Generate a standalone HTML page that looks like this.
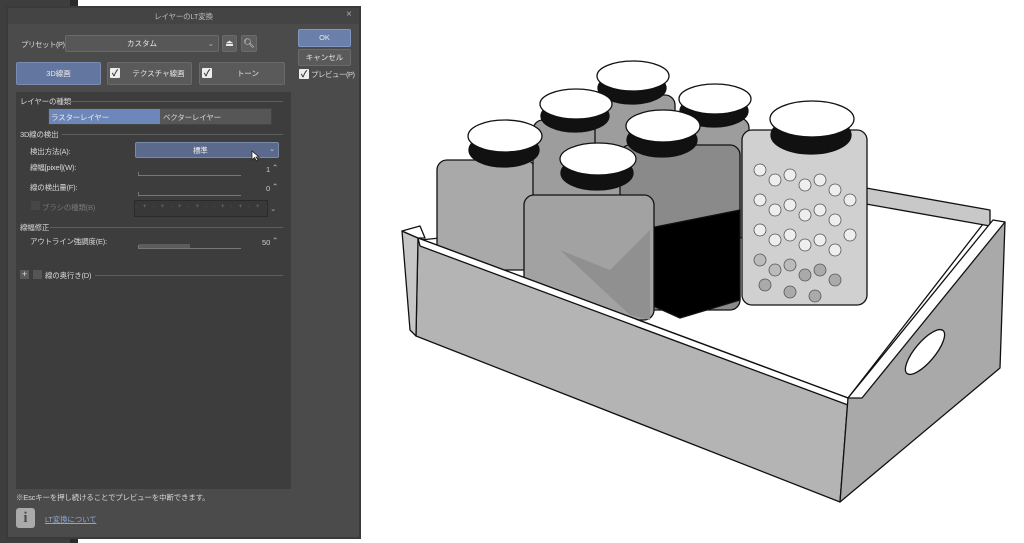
<!DOCTYPE html>
<html><head><meta charset="utf-8"><style>
*{margin:0;padding:0;box-sizing:border-box}
body{width:1024px;height:543px;background:#fff;position:relative;overflow:hidden;font-family:"Liberation Sans","Noto Sans CJK JP",sans-serif;font-size:7.5px;color:#ddd}
.a{position:absolute}
.lbl{position:absolute;font-size:7.5px;color:#d8d8d8;white-space:nowrap;letter-spacing:-0.2px}
.btn{position:absolute;border:1px solid #6a6a6a;background:#5a5a5a;color:#e8e8e8;text-align:center;border-radius:2px;font-size:7.5px;white-space:nowrap}
.sl{position:absolute;height:4px;border-left:1px solid #777;border-bottom:1px solid #777}
.hr{position:absolute;height:1px;background:#5e5e5e}
.chk{position:absolute;width:10px;height:10px;background:#eee;border-radius:1px;color:#333;font-size:9px;line-height:10px;text-align:center;font-weight:bold}
.sp{position:absolute;font-size:7.5px;color:#ccc}
</style></head><body>
<div class="a" style="left:0;top:0;width:70px;height:543px;background:#3e3e3e"></div>
<div class="a" style="left:70px;top:0;width:8px;height:543px;background:#2a2a2a"></div>
<div class="a" style="left:6px;top:6px;width:355px;height:533px;background:#3a3a3a"></div>
<div class="a" style="left:8px;top:8px;width:351px;height:529px;background:#4b4b4b"></div>
<div class="a" style="left:8px;top:8px;width:351px;height:16px;background:#444"></div>
<div class="lbl" style="left:0;width:367px;text-align:center;top:11px;color:#bbb">レイヤーのLT変換</div>
<div class="lbl" style="left:346px;top:9px;font-size:10px;color:#aaa">×</div>

<div class="lbl" style="left:21px;top:39px;letter-spacing:-0.5px">プリセット(P):</div>
<div class="btn" style="left:65px;top:35px;width:154px;height:17px;line-height:15px;background:#575757">カスタム<span style="position:absolute;right:4px;color:#bbb">⌄</span></div>
<div class="btn" style="left:222px;top:35px;width:15px;height:17px;background:#5e5e5e;font-size:9px;line-height:15px">⏏</div>
<div class="btn" style="left:241px;top:35px;width:16px;height:17px;background:#5e5e5e;font-size:9px;line-height:15px">🔍︎</div>

<div class="btn" style="left:298px;top:29px;width:53px;height:18px;line-height:16px;background:#6b7fab;border-color:#8497c0">OK</div>
<div class="btn" style="left:298px;top:49px;width:53px;height:17px;line-height:15px">キャンセル</div>
<div class="chk" style="left:299px;top:69px">✓</div>
<div class="lbl" style="left:311px;top:69px;letter-spacing:-0.5px">プレビュー(P)</div>

<div class="btn" style="left:16px;top:62px;width:85px;height:23px;line-height:21px;background:#6376a0;border-color:#7b8cb2">3D線画</div>
<div class="btn" style="left:107px;top:62px;width:85px;height:23px;line-height:21px;padding-left:18px">テクスチャ線画</div>
<div class="chk" style="left:110px;top:68px">✓</div>
<div class="btn" style="left:199px;top:62px;width:86px;height:23px;line-height:21px;padding-left:12px">トーン</div>
<div class="chk" style="left:202px;top:68px">✓</div>

<div class="a" style="left:16px;top:92px;width:275px;height:397px;background:#3d3d3d"></div>
<div class="lbl" style="left:20px;top:96px">レイヤーの種類</div><div class="hr" style="left:68px;top:101px;width:215px"></div>
<div class="a" style="left:48px;top:108px;width:224px;height:17px;background:#565656;border:1px solid #444"></div>
<div class="a" style="left:49px;top:109px;width:111px;height:15px;background:#6e87ba"></div>
<div class="lbl" style="left:51px;top:112px;color:#eee">ラスターレイヤー</div>
<div class="lbl" style="left:163px;top:112px">ベクターレイヤー</div>
<div class="lbl" style="left:20px;top:129px">3D線の検出</div><div class="hr" style="left:62px;top:134px;width:221px"></div>
<div class="lbl" style="left:30px;top:146px">検出方法(A):</div>
<div class="a" style="left:135px;top:142px;width:144px;height:16px;background:#5b6a8c;border:1px solid #7b8aa8;border-radius:2px"></div>
<div class="lbl" style="left:193px;top:145px;color:#eee">標準</div>
<div class="lbl" style="left:269px;top:144px;color:#ccc">⌄</div>
<svg class="a" style="left:251px;top:150px" width="10" height="12"><path d="M1 1 L1 10 L3.5 7.5 L5.5 11 L7 10 L5 7 L8 7 Z" fill="#fff" stroke="#222" stroke-width=".8"/></svg>
<div class="lbl" style="left:30px;top:162px">線幅[pixel](W):</div>
<div class="sp" style="left:266px;top:165px">1</div><div class="sp" style="left:272px;top:163px">⌃</div>
<div class="sl" style="left:138px;top:172px;width:103px"></div>
<div class="lbl" style="left:30px;top:182px">線の検出量(F):</div>
<div class="sp" style="left:266px;top:184px">0</div><div class="sp" style="left:272px;top:182px">⌃</div>
<div class="sl" style="left:138px;top:192px;width:103px"></div>
<div class="a" style="left:31px;top:201px;width:9px;height:9px;background:#474747"></div>
<div class="lbl" style="left:42px;top:202px;color:#777">ブラシの種類(B)</div>
<div class="a" style="left:134px;top:200px;width:134px;height:17px;background:#383838;border:1px solid #2a2a2a;color:#777;font-size:6px;letter-spacing:6px;line-height:12px;overflow:hidden">·+·+·+·+··+·+·+·+·</div>
<div class="lbl" style="left:270px;top:204px;color:#aaa">⌄</div>
<div class="lbl" style="left:20px;top:222px">線幅修正</div><div class="hr" style="left:50px;top:227px;width:233px"></div>
<div class="lbl" style="left:30px;top:236px">アウトライン強調度(E):</div>
<div class="sp" style="left:262px;top:238px">50</div><div class="sp" style="left:272px;top:236px">⌃</div>
<div class="sl" style="left:138px;top:245px;width:103px"></div>
<div class="a" style="left:139px;top:244px;width:51px;height:4px;background:#5c5c5c"></div>
<div class="a" style="left:20px;top:270px;width:9px;height:9px;background:#5a5a5a;color:#ddd;font-size:9px;line-height:8px;text-align:center">+</div>
<div class="a" style="left:33px;top:270px;width:9px;height:9px;background:#555"></div>
<div class="lbl" style="left:45px;top:270px">線の奥行き(D)</div><div class="hr" style="left:95px;top:275px;width:188px"></div>

<div class="lbl" style="left:16px;top:492px">※Escキーを押し続けることでプレビューを中断できます。</div>
<div class="a" style="left:16px;top:508px;width:19px;height:20px;background:#aaa;border-radius:3px;color:#4b4b4b;font-weight:bold;font-size:15px;text-align:center;line-height:20px;font-family:'Liberation Serif',serif">i</div>
<div class="lbl" style="left:45px;top:514px;color:#8aa6d0;text-decoration:underline">LT変換について</div>

<svg class="a" style="left:0;top:0" width="1024" height="543" viewBox="0 0 1024 543">
<g stroke="#111" stroke-width="1.3" stroke-linejoin="round">
<!-- floor & back inner walls -->
<polygon points="420,240 870,195 990,215 848,398" fill="#fff"/>
<polygon points="866,188 990,210 990,226 866,204" fill="#c8c8c8"/>
<!-- jars -->
<rect x="437" y="160" width="98" height="110" rx="10" fill="#a9a9a9"/>
<rect x="533" y="120" width="90" height="100" rx="10" fill="#9d9d9d"/>
<rect x="595" y="95" width="80" height="75" rx="10" fill="#9d9d9d"/>
<rect x="677" y="118" width="72" height="120" rx="10" fill="#9d9d9d"/>
<rect x="620" y="145" width="120" height="165" rx="10" fill="#8a8a8a"/>
<polygon points="640,230 740,210 740,300 680,318 640,300" fill="#000"/>
<rect x="524" y="195" width="130" height="125" rx="10" fill="#a2a2a2"/>
<polygon points="560,250 610,270 650,230 650,320 630,315" fill="#909090" stroke="none"/>
<rect x="742" y="130" width="125" height="175" rx="10" fill="#d0d0d0"/>
<g fill="#eee" stroke="#555" stroke-width=".8">
<circle cx="760" cy="170" r="6"/><circle cx="775" cy="180" r="6"/><circle cx="790" cy="175" r="6"/><circle cx="805" cy="185" r="6"/><circle cx="820" cy="180" r="6"/><circle cx="835" cy="190" r="6"/>
<circle cx="760" cy="200" r="6"/><circle cx="775" cy="210" r="6"/><circle cx="790" cy="205" r="6"/><circle cx="805" cy="215" r="6"/><circle cx="820" cy="210" r="6"/><circle cx="835" cy="220" r="6"/><circle cx="850" cy="200" r="6"/>
<circle cx="760" cy="230" r="6"/><circle cx="775" cy="240" r="6"/><circle cx="790" cy="235" r="6"/><circle cx="805" cy="245" r="6"/><circle cx="820" cy="240" r="6"/><circle cx="835" cy="250" r="6"/><circle cx="850" cy="235" r="6"/>
<circle cx="760" cy="260" r="6" fill="#bbb"/><circle cx="775" cy="270" r="6" fill="#bbb"/><circle cx="790" cy="265" r="6" fill="#bbb"/><circle cx="805" cy="275" r="6" fill="#aaa"/><circle cx="820" cy="270" r="6" fill="#aaa"/><circle cx="835" cy="280" r="6" fill="#aaa"/>
<circle cx="765" cy="285" r="6" fill="#aaa"/><circle cx="790" cy="292" r="6" fill="#aaa"/><circle cx="815" cy="296" r="6" fill="#aaa"/>
</g>
<g>
<ellipse cx="632" cy="88" rx="34" ry="16" fill="#111"/><ellipse cx="633" cy="76" rx="36" ry="15" fill="#fff"/>
<ellipse cx="575" cy="116" rx="34" ry="16" fill="#111"/><ellipse cx="576" cy="104" rx="36" ry="15" fill="#fff"/>
<ellipse cx="714" cy="111" rx="34" ry="16" fill="#111"/><ellipse cx="715" cy="99" rx="36" ry="15" fill="#fff"/>
<ellipse cx="504" cy="150" rx="35" ry="17" fill="#111"/><ellipse cx="505" cy="136" rx="37" ry="16" fill="#fff"/>
<ellipse cx="662" cy="140" rx="35" ry="17" fill="#111"/><ellipse cx="663" cy="126" rx="37" ry="16" fill="#fff"/>
<ellipse cx="811" cy="135" rx="40" ry="19" fill="#111"/><ellipse cx="812" cy="119" rx="42" ry="18" fill="#fff"/>
<ellipse cx="597" cy="173" rx="36" ry="17" fill="#111"/><ellipse cx="598" cy="159" rx="38" ry="16" fill="#fff"/>
</g>
<!-- front wall -->
<polygon points="418,238 848,398 840,502 416,336" fill="#b4b4b4"/>
<polygon points="418,238 848,398 848,405 420,246" fill="#fff"/>
<polygon points="402,231 418,238 416,336 410,330" fill="#c6c6c6"/>
<polygon points="402,231 420,226 425,238 418,238" fill="#fff"/>
<!-- right wall -->
<polygon points="848,398 993,228 1005,222 1000,368 840,502" fill="#a9a9a9"/>
<polygon points="848,398 862,398 1005,222 993,220" fill="#fff"/>
<ellipse cx="925" cy="352" rx="10" ry="28" transform="rotate(40 925 352)" fill="#fff"/>
</g>
</svg>
</body></html>
